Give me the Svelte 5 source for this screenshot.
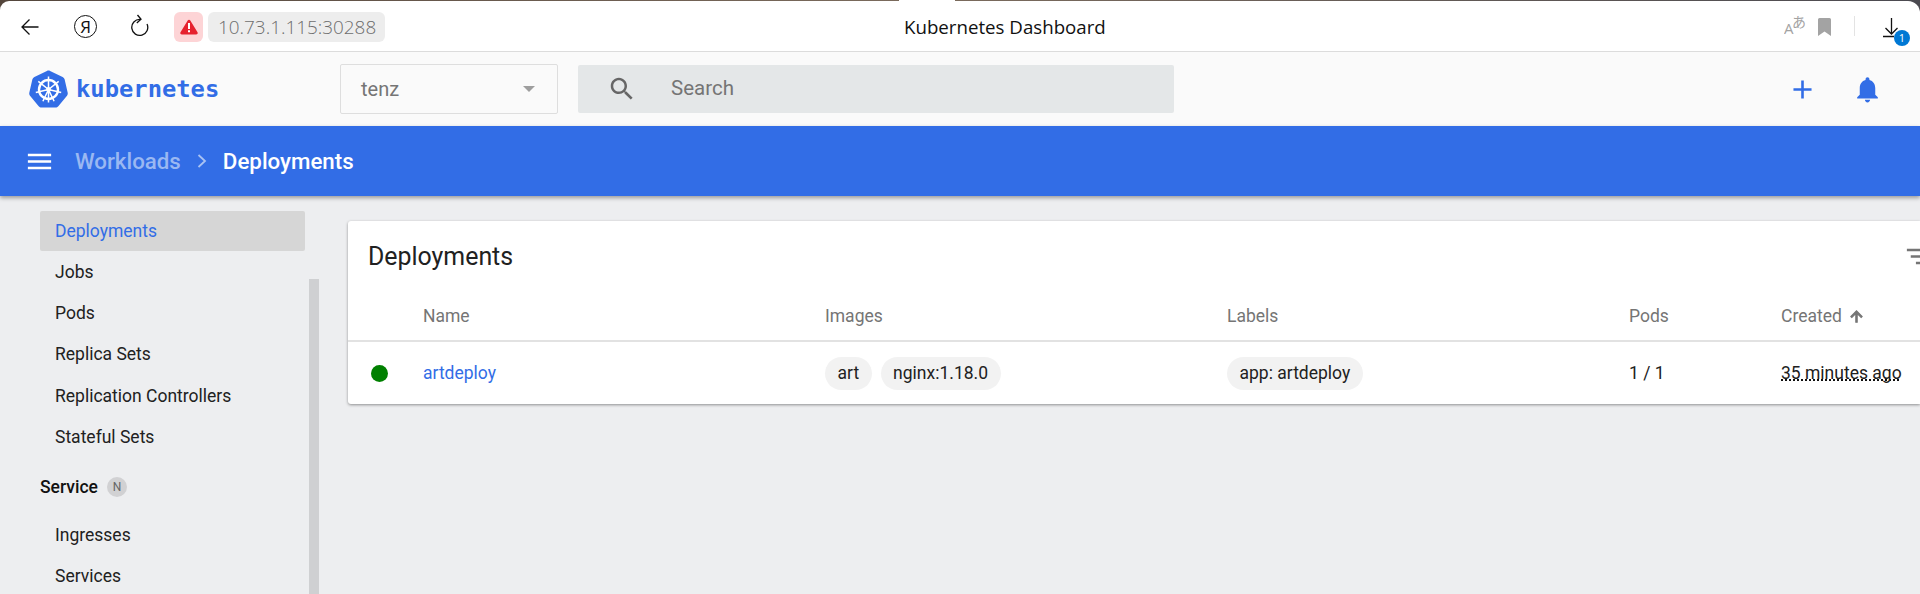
<script>
  const navTop = ['Jobs', 'Pods', 'Replica Sets', 'Replication Controllers', 'Stateful Sets'];
  const navService = ['Ingresses', 'Services'];
</script>

<div class="shell">
  <header class="browser">
    <svg class="back" width="20" height="20" viewBox="0 0 20 20" fill="none" stroke="#111" stroke-width="1.3"><path d="M18.500 10H2M9.500 2.500 2 10l7.500 7.500"/></svg>
    <span class="ya">Я</span>
    <svg class="reload" width="20" height="24" viewBox="0 0 20 24" fill="none" stroke="#111" stroke-width="1.3"><path d="M11 5.400A8 8 0 1 0 18 10"/><path d="M8.500 1 12 5.300 7.800 9"/></svg>
    <span class="warn">
      <svg width="18" height="16" viewBox="0 0 18 16"><path d="M9 .8c.6 0 1 .3 1.300.8l7.200 11.600c.6 1 0 2.300-1.300 2.300H1.800c-1.300 0-1.900-1.300-1.300-2.300L7.700 1.600C8 1.100 8.400.8 9 .8Z" fill="#e6212e"/><path d="M8 4h2v6H8zM8 11.300h2v2H8z" fill="#fff"/></svg>
    </span>
    <span class="url">10.73.1.115:30288</span>
    <span class="title">Kubernetes Dashboard</span>
    <svg class="translate" width="24" height="28" viewBox="0 0 24 28"><text x="0" y="22" class="ta">A</text><text x="8" y="15" class="tb">あ</text></svg>
    <svg class="bookmark" width="13" height="18" viewBox="0 0 13 18"><path d="M1.500 0h10A1.500 1.500 0 0 1 13 1.500V18l-6.500-4.500L0 18V1.500A1.500 1.500 0 0 1 1.500 0Z" fill="#a3a3a3"/></svg>
    <span class="divider"></span>
    <span class="download">
      <svg width="18" height="20" viewBox="0 0 18 20" fill="none" stroke="#111" stroke-width="1.300"><path d="M8.500 0v16M2.500 10l6 6 6-6M0 18.500h11"/></svg>
      <span class="badge">1</span>
    </span>
  </header>

  <div class="kd-header">
    <svg class="logo" width="39" height="38" viewBox="0 0 39 38">
      <path d="M19.500 0.500c.6 0 1.100.1 1.600.4l12.500 6c1 .5 1.700 1.300 2 2.400l3.100 13.500c.2 1.100 0 2.200-.7 3L29.300 36.200c-.7.900-1.700 1.300-2.800 1.300H12.500c-1.100 0-2.100-.4-2.800-1.300L1 25.800c-.7-.8-.9-1.900-.7-3L3.400 9.300c.3-1.100 1-1.900 2-2.400l12.500-6c.5-.3 1-.4 1.600-.4Z" fill="#326de6"/>
      <g fill="none" stroke="#fff">
        <circle cx="19.500" cy="19.500" r="9.500" stroke-width="2.400"/>
        <path stroke-width="1.500" d="M19.500 6.500v26M19.500 19.500 29.700 11.400M19.500 19.500 32.200 22.400M19.500 19.500 25.100 31.200M19.500 19.500 13.900 31.200M19.500 19.500 6.800 22.400M19.500 19.500 9.300 11.400"/>
        <circle cx="19.500" cy="19.500" r="2" fill="#fff" stroke-width="1"/>
      </g>
    </svg>
    <span class="wordmark">kubernetes</span>
    <div class="select">
      <span>tenz</span>
      <span class="caret"></span>
    </div>
    <div class="search">
      <svg width="30" height="30" viewBox="0 0 24 24" fill="#666"><path d="M15.500 14h-.79l-.28-.27C15.410 12.590 16 11.110 16 9.500 16 5.910 13.090 3 9.500 3S3 5.910 3 9.500 5.910 16 9.500 16c1.610 0 3.090-.59 4.230-1.570l.27.28v.79l5 4.990L20.490 19l-4.990-5zm-6 0C7.010 14 5 11.990 5 9.500S7.010 5 9.500 5 14 7.010 14 9.500 11.990 14 9.500 14z"/></svg>
      <span>Search</span>
    </div>
    <svg class="plus" width="31" height="31" viewBox="0 0 24 24" fill="#326de6"><path d="M19 13h-6v6h-2v-6H5v-2h6V5h2v6h6v2z"/></svg>
    <svg class="bell" width="31" height="31" viewBox="0 0 24 24" fill="#326de6"><path d="M12 22c1.100 0 2-.9 2-2h-4c0 1.100.89 2 2 2zm6-6v-5c0-3.070-1.640-5.640-4.500-6.320V4c0-.83-.67-1.500-1.500-1.500s-1.500.67-1.500 1.500v.68C7.630 5.360 6 7.920 6 11v5l-2 2v1h16v-1l-2-2z"/></svg>
  </div>

  <div class="toolbar">
    <svg width="31" height="31" viewBox="0 0 24 24" fill="#fff"><path d="M3 18h18v-2H3v2zm0-5h18v-2H3v2zm0-7v2h18V6H3z"/></svg>
    <span class="crumb">Workloads</span>
    <svg class="chev" width="11" height="14" viewBox="0 0 11 14" fill="none" stroke="#a9c2f3" stroke-width="1.800"><path d="M1.500 1 8 7l-6.500 6"/></svg>
    <span class="current">Deployments</span>
  </div>

  <div class="main">
    <aside class="side">
      <nav class="nav">
        <a class="item active" href="#d">Deployments</a>
        {#each navTop as n}
          <a class="item" href="#n">{n}</a>
        {/each}
        <div class="section"><span>Service</span><span class="ns">N</span></div>
        {#each navService as n}
          <a class="item" href="#n">{n}</a>
        {/each}
      </nav>
      <div class="scroll"></div>
    </aside>

    <section class="content">
      <div class="card">
        <div class="card-title">
          <h2>Deployments</h2>
          <svg width="31" height="31" viewBox="0 0 24 24" fill="#757575"><path d="M10 18h4v-2h-4v2zM3 6v2h18V6H3zm3 7h12v-2H6v2z"/></svg>
        </div>
        <div class="row head">
          <span></span>
          <span>Name</span>
          <span>Images</span>
          <span>Labels</span>
          <span>Pods</span>
          <span class="created">Created
            <svg width="17" height="17" viewBox="0 0 24 24" fill="#757575" stroke="#757575" stroke-width="1.500"><path d="M4 12l1.410 1.410L11 7.830V20h2V7.830l5.580 5.590L20 12l-8-8-8 8z"/></svg>
          </span>
        </div>
        <div class="row body">
          <span class="dot"></span>
          <a href="#a">artdeploy</a>
          <span class="chips"><span class="chip">art</span><span class="chip">nginx:1.18.0</span></span>
          <span class="chips"><span class="chip">app: artdeploy</span></span>
          <span>1 / 1</span>
          <span class="age">35 minutes ago</span>
        </div>
      </div>
    </section>
  </div>
</div>

<style>
  :global(body) {
    margin: 0;
    overflow: hidden;
    background: #edeef0;
  }
  .shell {
    width: 1920px;
    height: 594px;
    overflow: hidden;
    display: flex;
    flex-direction: column;
    font-family: Roboto, "Liberation Sans", sans-serif;
    background: linear-gradient(90deg, #54463c 0, #7a6a5c 899px, #fff 899px, #fff 955px, #7a6a5c 955px, #4b4a50 1920px) top / 100% 12px no-repeat, #edeef0;
  }
  .browser {
    flex: none;
    margin-top: 1px;
    height: 51px;
    box-sizing: border-box;
    display: flex;
    align-items: center;
    background: #fff;
    border-radius: 9px 12px 0 0;
    border-bottom: 1px solid #dcdcdc;
    padding-left: 20px;
    font-family: "Open Sans", "Noto Sans", sans-serif;
  }
  .back { margin-top: 2px; }
  .ya {
    margin-left: 34px;
    width: 21px;
    height: 21px;
    border: 1.300px solid #111;
    border-radius: 50%;
    display: flex;
    align-items: center;
    justify-content: center;
    font-size: 17px;
    color: #111;
    margin-top: 1px;
  }
  .reload { margin-left: 32px; }
  .warn {
    margin-left: 25px;
    width: 29px;
    height: 30px;
    margin-top: 1px;
    border-radius: 6px;
    background: #fdd4d6;
    display: flex;
    align-items: center;
    justify-content: center;
  }
  .url {
    margin-left: 5px;
    margin-top: 1px;
    width: 177px;
    height: 30px;
    box-sizing: border-box;
    padding-left: 10px;
    border-radius: 6px;
    background: #ededed;
    color: #6e6e6e;
    font-size: 18.900px;
    line-height: 30px;
    font-weight: 300;
    white-space: nowrap;
  }
  .title {
    margin-left: 519px;
    font-size: 18.700px;
    color: #111;
    white-space: nowrap;
  }
  .translate { margin-left: auto; margin-right: -2px; }
  .ta { font: 400 15px "Open Sans", sans-serif; fill: #a3a3a3; }
  .tb { font: 400 14px "Noto Sans CJK JP", sans-serif; fill: #a3a3a3; }
  .bookmark { margin-left: 12px; margin-top: 1px; }
  .divider { margin-left: 23px; width: 1px; height: 20px; background: #e3e3e3; }
  .download { position: relative; margin-left: 28px; margin-right: 19px; width: 18px; height: 20px; margin-top: 3px; }
  .download svg { display: block; }
  .badge {
    position: absolute;
    left: 11px;
    top: 12px;
    width: 16px;
    height: 16px;
    border-radius: 50%;
    background: #0078d4;
    color: #fff;
    font-size: 11px;
    line-height: 16px;
    text-align: center;
  }

  .kd-header {
    flex: none;
    height: 74px;
    display: flex;
    align-items: center;
    background: #fafafa;
    padding-left: 29px;
  }
  .logo { flex: none; }
  .wordmark {
    margin-left: 8px;
    width: 264px;
    font: 700 23.800px "DejaVu Sans Mono", monospace;
    color: #326de6;
  }
  .select {
    width: 218px;
    height: 50px;
    box-sizing: border-box;
    border: 1px solid #dedede;
    border-radius: 2px;
    padding: 0 22px 0 20px;
    display: flex;
    align-items: center;
    justify-content: space-between;
    color: #757575;
    font-size: 20px;
  }
  .caret {
    width: 0;
    height: 0;
    border-left: 6px solid transparent;
    border-right: 6px solid transparent;
    border-top: 6px solid #9e9e9e;
  }
  .search {
    margin-left: 20px;
    width: 596px;
    height: 48px;
    border-radius: 2px;
    background: #e4e7e8;
    display: flex;
    align-items: center;
    padding-left: 29px;
    box-sizing: border-box;
    color: #757575;
    font-size: 20.500px;
  }
  .search span { margin-left: 34px; margin-top: -2px; }
  .plus { margin-left: 613px; }
  .bell { margin-left: 34px; }

  .toolbar {
    flex: none;
    position: relative;
    height: 70px;
    background: #326de6;
    box-shadow: 0 2px 4px rgba(0, 0, 0, .35);
    display: flex;
    align-items: center;
    padding-left: 24px;
    font-size: 22.300px;
    font-weight: 500;
  }
  .crumb { margin-left: 20px; color: #9ab8f2; }
  .chev { margin-left: 16px; }
  .current { margin-left: 15px; color: #fff; }

  .main { flex: 1; display: flex; min-height: 0; }
  .side {
    flex: none;
    width: 348px;
    box-sizing: border-box;
    padding-left: 40px;
    display: flex;
    gap: 4px;
  }
  .nav {
    width: 265px;
    padding-top: 15px;
    display: flex;
    flex-direction: column;
    gap: 1.150px;
  }
  .item {
    flex: none;
    height: 40px;
    padding-left: 15px;
    line-height: 40px;
    border-radius: 2px;
    font-size: 17.500px;
    color: #212121;
    text-decoration: none;
  }
  .item.active { background: #d6d6d6; color: #326de6; }
  .section {
    flex: none;
    height: 40px;
    margin: 9px 0 7px;
    display: flex;
    align-items: center;
    gap: 9px;
    font-size: 17.500px;
    font-weight: 500;
    color: #111;
  }
  .ns {
    width: 20px;
    height: 20px;
    border-radius: 50%;
    background: #d1d1d3;
    color: #666;
    font-size: 12px;
    font-weight: 400;
    line-height: 20px;
    text-align: center;
  }
  .scroll { flex: none; width: 10px; margin-top: 83px; background: #cfd0d2; }

  .content { flex: 1; padding-top: 25px; min-width: 0; }
  .card {
    height: 183px;
    background: #fff;
    border-radius: 3px 0 0 3px;
    box-shadow: 0 1px 3px rgba(0, 0, 0, .4);
  }
  .card-title {
    height: 71px;
    padding: 0 0 0 20px;
    display: flex;
    align-items: center;
    justify-content: space-between;
  }
  h2 {
    margin: 0;
    font-size: 24.900px;
    font-weight: 400;
    color: #212121;
  }
  .card-title svg { margin-right: -14px; }
  .row {
    display: grid;
    grid-template-columns: 75px 402px 402px 402px 152px 1fr;
    align-items: center;
    font-size: 17.500px;
    color: #212121;
  }
  .head {
    height: 50px;
    box-sizing: border-box;
    border-bottom: 2px solid #e2e2e2;
    color: #757575;
  }
  .created { display: flex; align-items: center; gap: 6px; }
  .body { height: 62px; }
  .dot {
    width: 17px;
    height: 17px;
    margin-left: 23px;
    border-radius: 50%;
    background: #008000;
  }
  .body a { color: #326de6; text-decoration: none; }
  .chips { display: flex; gap: 9px; }
  .chip {
    height: 33px;
    line-height: 33px;
    padding: 0 12.500px;
    border-radius: 17px;
    background: #f2f2f2;
    white-space: nowrap;
  }
  .age {
    justify-self: start;
    white-space: nowrap;
    text-decoration: underline dotted #111 1.500px;
    text-decoration-skip-ink: none;
    text-underline-offset: 0;
  }
</style>
